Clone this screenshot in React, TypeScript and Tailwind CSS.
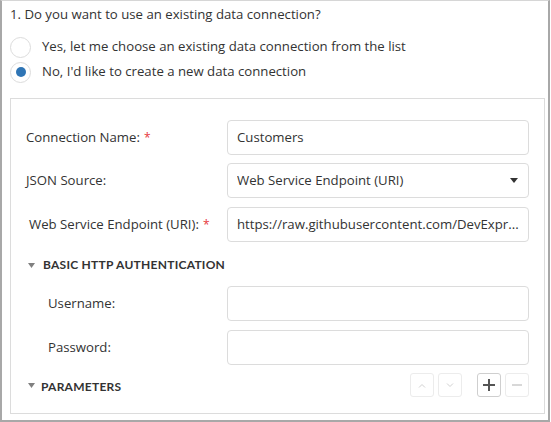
import React from 'react'

const font = { fontFamily: '"Segoe UI", "Open Sans", sans-serif' }

function Radio({ checked, label }: { checked?: boolean; label: string }) {
  return (
    <div className="flex items-center h-[20px]">
      <div className="w-[21px] h-[21px] rounded-full border border-[#dcdcdc] bg-white flex items-center justify-center">
        {checked && <div className="w-[10px] h-[10px] rounded-full bg-[#2f75b5]" />}
      </div>
      <span className="ml-[11px] text-[13.2px] text-[#333]">{label}</span>
    </div>
  )
}

function Field({ label, required, value, select, labelPad = 'pl-[15px]', className = '' }: {
  label: string
  required?: boolean
  value?: string
  select?: boolean
  labelPad?: string
  className?: string
}) {
  return (
    <div className={`flex items-center h-[35px] ${className}`}>
      <div className={`w-[216px] ${labelPad} text-[13.2px] text-[#333]`}>
        {label}
        {required && <span className="text-[#e6353a] ml-[4px] text-[12px]">*</span>}
      </div>
      <div className="w-[302px] h-[35px] border border-[#dcdcdc] rounded-[4px] flex items-center px-[9px] text-[13.2px] text-[#333] whitespace-nowrap overflow-hidden">
        <span className="flex-1 truncate">{value}</span>
        {select && (
          <svg width="8" height="5" viewBox="0 0 8 5" className="mr-[1px]">
            <path d="M0 0h8L4 5z" fill="#333" />
          </svg>
        )}
      </div>
    </div>
  )
}

function Caret() {
  return (
    <svg width="7" height="5" viewBox="0 0 7 5">
      <path d="M0 0h7L3.5 5z" fill="#808080" />
    </svg>
  )
}

function IconBtn({ children, active }: { children: React.ReactNode; active?: boolean }) {
  return (
    <div className={`w-[24px] h-[24px] rounded-[3px] border flex items-center justify-center ${active ? 'border-[#cfcfcf]' : 'border-[#ececec]'}`}>
      {children}
    </div>
  )
}

export default function App() {
  return (
    <div style={font} className="w-[550px] h-[422px] bg-white border-2 border-t border-[#a8a8a8] border-t-[#d6d6d6] box-border">
      <div className="pl-[8px] pt-[3px] text-[13.2px] text-[#333] leading-[20px]">
        1. Do you want to use an existing data connection?
      </div>
      <div className="pl-[8px] mt-[13px]">
        <Radio label="Yes, let me choose an existing data connection from the list" />
        <div className="mt-[5px]">
          <Radio checked label="No, I'd like to create a new data connection" />
        </div>
      </div>

      <div className="ml-[8px] mt-[16px] w-[535px] h-[316px] border border-[#dcdcdc] pt-[21px]">
        <Field label="Connection Name:" required value="Customers" />
        <Field label="JSON Source:" value="Web Service Endpoint (URI)" select className="mt-[8px]" />
        <Field
          label="Web Service Endpoint (URI):"
          required
          value="https://raw.githubusercontent.com/DevExpr..."
          labelPad="pl-[18px]"
          className="mt-[9px]"
        />

        <div className="flex items-center h-[20px] mt-[13px] pl-[17px]">
          <Caret />
          <span className="ml-[8px] text-[12px] font-bold text-[#333] tracking-[0.25px]" style={{ fontFamily: 'Lato, sans-serif' }}>
            BASIC HTTP AUTHENTICATION
          </span>
        </div>

        <Field label="Username:" labelPad="pl-[37px]" className="mt-[11px]" />
        <Field label="Password:" labelPad="pl-[37px]" className="mt-[9px]" />

        <div className="flex items-center h-[24px] mt-[8px] pl-[17px] pr-[15px]">
          <Caret />
          <span className="ml-[6px] mt-[3px] text-[12px] font-bold text-[#333] tracking-[0.25px] flex-1" style={{ fontFamily: 'Lato, sans-serif' }}>
            PARAMETERS
          </span>
          <IconBtn>
            <svg width="8" height="5" viewBox="0 0 8 5"><path d="M1 4.5L4 1.5 7 4.5" stroke="#d0d0d0" fill="none" /></svg>
          </IconBtn>
          <div className="ml-[4px]">
            <IconBtn>
              <svg width="8" height="5" viewBox="0 0 8 5"><path d="M1 0.5L4 3.5 7 0.5" stroke="#d0d0d0" fill="none" /></svg>
            </IconBtn>
          </div>
          <div className="ml-[15px]">
            <IconBtn active>
              <svg width="12" height="12" viewBox="0 0 12 12"><path d="M6 0v12M0 6h12" stroke="#555" strokeWidth="2" /></svg>
            </IconBtn>
          </div>
          <div className="ml-[4px]">
            <IconBtn>
              <svg width="10" height="2" viewBox="0 0 10 2"><path d="M0 1h10" stroke="#d8d8d8" strokeWidth="2" /></svg>
            </IconBtn>
          </div>
        </div>
      </div>
    </div>
  )
}
